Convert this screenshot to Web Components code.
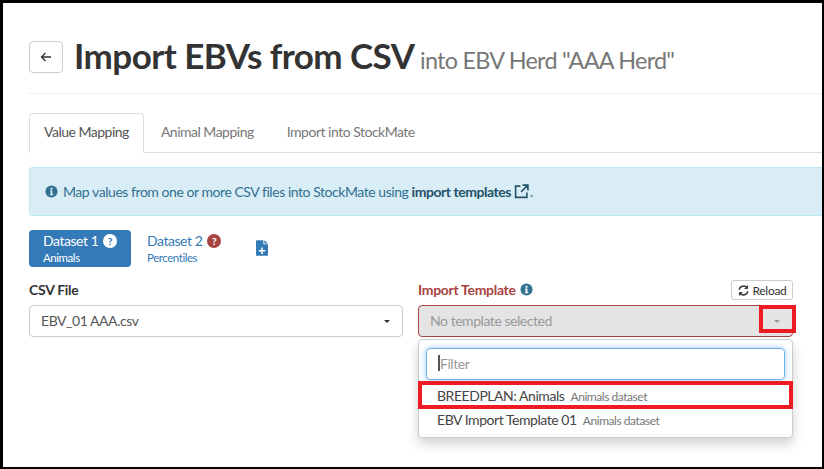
<!DOCTYPE html>
<html><head><meta charset="utf-8"><style>
html,body{margin:0;padding:0;background:#fff}
body{font-family:Lato,"Liberation Sans",sans-serif;color:#333;font-size:14px;overflow:hidden;letter-spacing:-.45px}
</style></head><body>
<app-frame>
  <page-header title-text="Import EBVs from CSV" sub="into EBV Herd &quot;AAA Herd&quot;"></page-header>
  <tab-bar></tab-bar>
  <info-alert></info-alert>
  <dataset-pills></dataset-pills>
  <form-row></form-row>
</app-frame>
<script>
const def=(name,html,init)=>customElements.define(name,class extends HTMLElement{
  constructor(){super();this.attachShadow({mode:'open'}).innerHTML=html;}
  connectedCallback(){init&&init(this)}
});
def('app-frame',`<style>:host{display:block;box-sizing:border-box;width:824px;height:469px;border:solid #000;border-width:3px 2px 2px 3px;padding:38px 0 0 26px;overflow:hidden;position:relative;background:#fff}</style><slot></slot>`);
def('page-header',`<style>
:host{display:flex;align-items:flex-start;gap:11px;height:52px;border-bottom:1px solid #eee;font-family:Lato,sans-serif}
button{box-sizing:border-box;width:34px;height:32px;margin:0;background:#fff;border:1px solid #ccc;border-radius:4px;padding:0;display:flex;align-items:center;justify-content:center}
h1{margin:-6px 0 0;font-size:35px;font-weight:700;line-height:40px;color:#333;white-space:nowrap;letter-spacing:-.55px}
small{font-size:23.4px;font-weight:400;color:#777;margin-left:-1px;letter-spacing:-.75px}
</style><button><svg width="12" height="12" viewBox="0 0 12 12" fill="none" stroke="#333" stroke-width="1.3"><path d="M11 6H1.5M5.5 2 1.500 6l4 4"/></svg></button><h1><span id="t"></span> <small id="s"></small></h1>`,e=>{e.shadowRoot.getElementById('t').textContent=e.getAttribute('title-text');e.shadowRoot.getElementById('s').textContent=e.getAttribute('sub')});
def('tab-bar',`<style>
:host{display:flex;margin-top:19px;height:39px;border-bottom:1px solid #ddd;font-family:Lato,sans-serif;font-size:14px;letter-spacing:-.5px}
a{box-sizing:border-box;height:40px;padding:8px 15px 0;color:#777;border:1px solid transparent;margin-right:1px;white-space:nowrap;line-height:20px}
a.on{color:#555;background:#fff;border-color:#ddd #ddd #fff;border-radius:4px 4px 0 0;padding:8px 14px 0;margin-right:1px}
</style><a class="on">Value Mapping</a><a>Animal Mapping</a><a>Import into StockMate</a>`);
def('info-alert',`<style>
:host{display:flex;align-items:center;box-sizing:border-box;margin-top:14px;height:49px;background:#d9edf7;border:1px solid #bce8f1;border-right:0;border-radius:4px 0 0 4px;padding:0 0 0 15px;color:#31708f;font-family:Lato,sans-serif;font-size:14px;white-space:nowrap}
b{font-weight:700;color:#245269}
svg{display:inline-block;flex:none}
</style><svg width="13" height="13" viewBox="0 0 14 14" style="margin-right:5px"><circle cx="7" cy="7" r="6.500" fill="#31708f"/><path d="M6 3h2v2H6zM5.500 6H8v4h1v1H5.200v-1H6V7h-.5z" fill="#d9edf7"/></svg><span>Map values from one or more CSV files into StockMate using <b>import templates</b></span><svg width="15" height="15" viewBox="0 0 14 14" fill="none" stroke="#245269" stroke-width="1.500" style="margin:0 1px 0 3px"><path d="M6 2H1.500v10.500H12V8M8 1h5v5M13 1 6.500 7.500"/></svg><span>.</span>`);
def('dataset-pills',`<style>
:host{display:flex;align-items:flex-start;margin-top:14px;height:37px;font-family:Lato,sans-serif}
.p{box-sizing:border-box;height:37px;border-radius:4px;padding:1px 14px 0;color:#337ab7;font-size:14px;line-height:18px;white-space:nowrap}
.p.on{background:#337ab7;color:#fff;width:102px}
.t{display:flex;align-items:center;gap:5px;height:20px}
small{display:block;font-size:11.500px;line-height:13px;margin-top:0}
.q{width:14px;height:14px;border-radius:50%;font-size:10px;font-weight:900;line-height:14px;text-align:center;background:#a94442;color:#fff;letter-spacing:0}
.on .q{background:#fff;color:#337ab7}
svg{margin:10px 0 0 21px}
</style><div class="p on"><div class="t">Dataset 1 <span class="q">?</span></div><small>Animals</small></div>
<div class="p" style="padding-left:16px"><div class="t">Dataset 2 <span class="q">?</span></div><small>Percentiles</small></div>
<svg width="12" height="16" viewBox="0 0 13 17"><path d="M1 0h7v4.500h5V16a1 1 0 0 1-1 1H1a1 1 0 0 1-1-1V1a1 1 0 0 1 1-1z" fill="#337ab7"/><path d="M9 0l4 3.500H9z" fill="#337ab7"/><path d="M5.700 8h1.600v2.700H10v1.600H7.300v2.700H5.700v-2.700H3v-1.600h2.700z" fill="#fff"/></svg>`);
def('form-row',`<style>
:host{display:grid;grid-template-columns:374px 375px;column-gap:15px;margin-top:14px;font-family:Lato,sans-serif;font-size:14px;position:relative}
.l{height:24px;display:flex;align-items:flex-start;font-weight:700;line-height:17px;color:#333;position:relative;letter-spacing:-.3px}
.sel{box-sizing:border-box;height:32px;border:1px solid #ccc;border-radius:4px;background:#fff;display:flex;align-items:center;justify-content:space-between;padding:0 12px 2px 11px;color:#555}
.c{width:0;height:0;border:3.500px solid transparent;border-top-color:#333;border-bottom:0;margin-top:2px}
.err{color:#a94442}
.err .i{margin:2px 0 0 4px}
.rl{margin-left:auto;box-sizing:border-box;width:62px;height:20px;margin-top:-1px;border:1px solid #ccc;border-radius:3px;background:#fff;display:flex;align-items:center;justify-content:center;gap:4px;font-size:12px;font-weight:400;color:#333;letter-spacing:-.3px}
.d{background:#e4e4e4;border-color:#a94442;color:#999}
.d .c{border-top-color:#999}
</style>
<div><div class="l">CSV File</div><div class="sel">EBV_01 AAA.csv<span class="c"></span></div></div>
<div><div class="l err">Import Template<svg class="i" width="13" height="13" viewBox="0 0 14 14"><circle cx="7" cy="7" r="6.500" fill="#31708f"/><path d="M6 3h2v2H6zM5.500 6H8v4h1v1H5.200v-1H6V7h-.5z" fill="#fff"/></svg><span class="rl"><svg width="11" height="11" viewBox="0 0 12 12" fill="none" stroke="#333" stroke-width="1.600"><path d="M1.300 5A4.800 4.800 0 0 1 9.800 3M10.700 7A4.800 4.800 0 0 1 2.200 9"/><path d="M10.500.5v3.300H7.200M1.500 11.500V8.200h3.300" fill="#333" stroke-width="1"/></svg>Reload</span></div><div class="sel d">No template selected<span class="c"></span></div></div>
<template-menu></template-menu>
<red-mark style="left:730px;top:24px;width:37px;height:28px"></red-mark>
<red-mark style="left:389px;top:100px;width:375px;height:28px"></red-mark>`);
def('template-menu',`<style>
:host{position:absolute;left:389px;top:58px;box-sizing:border-box;width:375px;height:99px;background:#fff;border:1px solid #ccc;border-radius:4px;box-shadow:0 6px 12px rgba(0,0,0,.175);font-family:Lato,sans-serif;font-size:14px;padding:8px 7px 0}
.f{box-sizing:border-box;height:32px;border:1px solid #66afe9;border-radius:4px;box-shadow:0 0 6px rgba(102,175,233,.6);padding:0 0 2px 11px;color:#999;display:flex;align-items:center}
.f i{display:inline-block;width:2px;height:16px;background:#555}
.r{height:25px;line-height:25px;padding-left:11px;color:#444;white-space:nowrap}
.r small{font-size:12px;color:#777;margin-left:3px}
</style><div class="f"><i></i>Filter</div><div style="height:3px"></div><div class="r">BREEDPLAN: Animals <small>Animals dataset</small></div><div class="r" style="margin-top:-1px">EBV Import Template 01 <small>Animals dataset</small></div>`);
def('red-mark',`<style>:host{position:absolute;box-sizing:border-box;border:4px solid #ed1c24;z-index:5;pointer-events:none}</style>`);
</script>
</body></html>
